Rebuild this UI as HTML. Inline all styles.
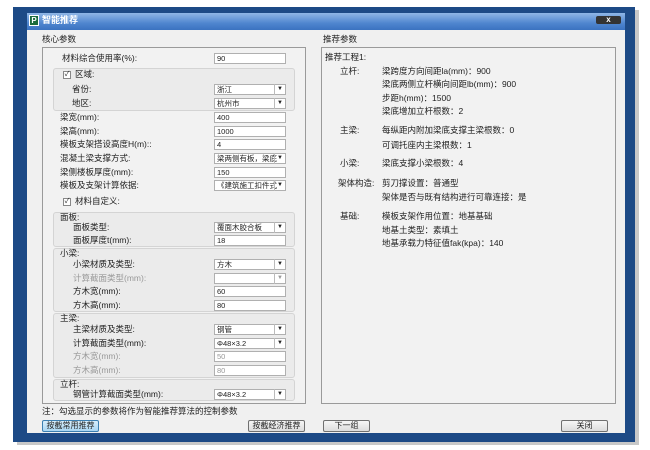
<!DOCTYPE html>
<html><head><meta charset="utf-8"><style>
*{margin:0;padding:0;box-sizing:border-box}
body{width:650px;height:450px;background:#fff;position:relative;overflow:hidden;font-family:"Liberation Sans","Noto Sans CJK SC",sans-serif;font-size:8.5px;color:#222}
.a{position:absolute;white-space:nowrap;line-height:11px}
.frame{position:absolute;left:13px;top:7px;width:622px;height:435px;background:#1d4a86;box-shadow:4px 3px 0 #c8c8c8}
.title{position:absolute;left:27px;top:13px;width:598px;height:17px;background:linear-gradient(#8fb6e6,#4f86cf 60%,#3a72c0)}
.content{position:absolute;left:27px;top:30px;width:598px;height:403px;background:#f0f0f0}
.box{position:absolute;border:1px solid #9a9a9a;background:#f2f2f2}
.grp{position:absolute;border:1px solid #d4d4d4;border-radius:3px;background:#ebebeb}
.in{position:absolute;height:11px;background:#fff;border:1px solid #b0b0b0;padding-left:2px;font-size:7.5px;line-height:9px}
.dd{position:absolute;width:11px;height:11px;border-left:1px solid #bbb;font-size:6px;line-height:10px;text-align:center}
.g{color:#999}
.btn{position:absolute;height:12px;border:1px solid #707070;border-radius:2px;background:linear-gradient(#f6f6f6,#dcdcdc);text-align:center;line-height:10px;font-size:8px}
.cb{display:inline-block;width:8px;height:8px;border:1px solid #888;background:#fff;font-size:7px;line-height:6px;text-align:center;vertical-align:middle;margin-right:4px}
</style></head><body>
<div class="frame"></div>
<div class="title"></div>
<div class="a" style="left:29px;top:15px;width:10px;height:11px;background:#1a6b3c;border:1px solid #fff;color:#fff;font-size:8px;font-weight:bold;line-height:9px;text-align:center">P</div>
<div class="a" style="left:42px;top:15px;color:#fff;font-weight:bold;font-size:9px">智能推荐</div>
<div class="a" style="left:596px;top:16px;width:25px;height:8px;background:#333;border-radius:2px;color:#fff;font-size:8px;line-height:8px;text-align:center;font-weight:bold">x</div>
<div class="content"></div>
<div class="a" style="left:42px;top:34px">核心参数</div>
<div class="a" style="left:323px;top:34px">推荐参数</div>
<div class="box" style="left:42px;top:47px;width:264px;height:357px"></div>
<div class="box" style="left:321px;top:47px;width:295px;height:357px"></div>

<div class="grp" style="left:53px;top:68px;width:242px;height:43px"></div>
<div class="grp" style="left:53px;top:212px;width:242px;height:35px"></div>
<div class="grp" style="left:53px;top:248px;width:242px;height:64px"></div>
<div class="grp" style="left:53px;top:313px;width:242px;height:65px"></div>
<div class="grp" style="left:53px;top:379px;width:242px;height:22px"></div>

<div class="a" style="left:62px;top:53px">材料综合使用率(%):</div><div class="in" style="left:214px;top:53px;width:72px">90</div>
<div class="a" style="left:63px;top:69px"><span class="cb">✓</span>区域:</div>
<div class="a" style="left:72px;top:84px">省份:</div><div class="in" style="left:214px;top:84px;width:72px">浙江</div><div class="dd" style="left:274px;top:84px">▼</div>
<div class="a" style="left:72px;top:98px">地区:</div><div class="in" style="left:214px;top:98px;width:72px">杭州市</div><div class="dd" style="left:274px;top:98px">▼</div>
<div class="a" style="left:60px;top:112px">梁宽(mm):</div><div class="in" style="left:214px;top:112px;width:72px">400</div>
<div class="a" style="left:60px;top:126px">梁高(mm):</div><div class="in" style="left:214px;top:126px;width:72px">1000</div>
<div class="a" style="left:60px;top:139px">模板支架搭设高度H(m)::</div><div class="in" style="left:214px;top:139px;width:72px">4</div>
<div class="a" style="left:60px;top:153px">混凝土梁支撑方式:</div><div class="in" style="left:214px;top:153px;width:72px">梁两侧有板，梁底</div><div class="dd" style="left:274px;top:153px">▼</div>
<div class="a" style="left:60px;top:167px">梁侧楼板厚度(mm):</div><div class="in" style="left:214px;top:167px;width:72px">150</div>
<div class="a" style="left:60px;top:180px">模板及支架计算依据:</div><div class="in" style="left:214px;top:180px;width:72px">《建筑施工扣件式</div><div class="dd" style="left:274px;top:180px">▼</div>
<div class="a" style="left:63px;top:196px"><span class="cb">✓</span>材料自定义:</div>

<div class="a" style="left:60px;top:212px">面板:</div>
<div class="a" style="left:73px;top:222px">面板类型:</div><div class="in" style="left:214px;top:222px;width:72px">覆面木胶合板</div><div class="dd" style="left:274px;top:222px">▼</div>
<div class="a" style="left:73px;top:235px">面板厚度t(mm):</div><div class="in" style="left:214px;top:235px;width:72px">18</div>

<div class="a" style="left:60px;top:248px">小梁:</div>
<div class="a" style="left:73px;top:259px">小梁材质及类型:</div><div class="in" style="left:214px;top:259px;width:72px">方木</div><div class="dd" style="left:274px;top:259px">▼</div>
<div class="a g" style="left:73px;top:273px">计算截面类型(mm):</div><div class="in" style="left:214px;top:273px;width:72px"></div><div class="dd g" style="left:274px;top:273px">▼</div>
<div class="a" style="left:73px;top:286px">方木宽(mm):</div><div class="in" style="left:214px;top:286px;width:72px">60</div>
<div class="a" style="left:73px;top:300px">方木高(mm):</div><div class="in" style="left:214px;top:300px;width:72px">80</div>

<div class="a" style="left:60px;top:313px">主梁:</div>
<div class="a" style="left:73px;top:324px">主梁材质及类型:</div><div class="in" style="left:214px;top:324px;width:72px">钢管</div><div class="dd" style="left:274px;top:324px">▼</div>
<div class="a" style="left:73px;top:338px">计算截面类型(mm):</div><div class="in" style="left:214px;top:338px;width:72px">Φ48×3.2</div><div class="dd" style="left:274px;top:338px">▼</div>
<div class="a g" style="left:73px;top:351px">方木宽(mm):</div><div class="in g" style="left:214px;top:351px;width:72px">50</div>
<div class="a g" style="left:73px;top:365px">方木高(mm):</div><div class="in g" style="left:214px;top:365px;width:72px">80</div>

<div class="a" style="left:60px;top:379px">立杆:</div>
<div class="a" style="left:73px;top:389px">钢管计算截面类型(mm):</div><div class="in" style="left:214px;top:389px;width:72px">Φ48×3.2</div><div class="dd" style="left:274px;top:389px">▼</div>

<div class="a" style="left:42px;top:406px">注：勾选显示的参数将作为智能推荐算法的控制参数</div>
<div class="btn" style="left:42px;top:420px;width:57px;background:linear-gradient(#d8eefb,#a9d6f3);border-color:#3c7fb1">按截常用推荐</div>
<div class="btn" style="left:248px;top:420px;width:57px">按截经济推荐</div>
<div class="btn" style="left:323px;top:420px;width:47px">下一组</div>
<div class="btn" style="left:561px;top:420px;width:47px">关闭</div>

<div class="a" style="left:325px;top:52px">推荐工程1:</div>
<div class="a" style="left:340px;top:66px">立杆:</div>
<div class="a" style="left:382px;top:66px">梁跨度方向间距la(mm)：900</div>
<div class="a" style="left:382px;top:79px">梁底两侧立杆横向间距lb(mm)：900</div>
<div class="a" style="left:382px;top:93px">步距h(mm)：1500</div>
<div class="a" style="left:382px;top:106px">梁底增加立杆根数：2</div>
<div class="a" style="left:340px;top:125px">主梁:</div>
<div class="a" style="left:382px;top:125px">每纵距内附加梁底支撑主梁根数：0</div>
<div class="a" style="left:382px;top:140px">可调托座内主梁根数：1</div>
<div class="a" style="left:340px;top:158px">小梁:</div>
<div class="a" style="left:382px;top:158px">梁底支撑小梁根数：4</div>
<div class="a" style="left:338px;top:178px">架体构造:</div>
<div class="a" style="left:382px;top:178px">剪刀撑设置：普通型</div>
<div class="a" style="left:382px;top:192px">架体是否与既有结构进行可靠连接：是</div>
<div class="a" style="left:340px;top:211px">基础:</div>
<div class="a" style="left:382px;top:211px">模板支架作用位置：地基基础</div>
<div class="a" style="left:382px;top:225px">地基土类型：素填土</div>
<div class="a" style="left:382px;top:238px">地基承载力特征值fak(kpa)：140</div>
</body></html>
